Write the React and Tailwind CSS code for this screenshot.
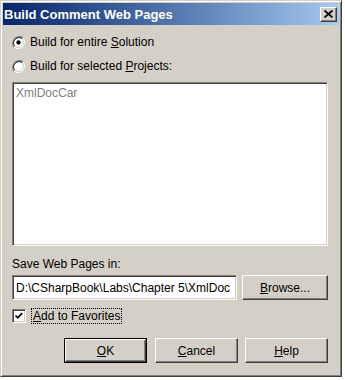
import React from "react";

const font = { fontFamily: '"Liberation Sans", Arial, sans-serif' };

function Radio({ checked }) {
  return (
    <svg width="13" height="13" viewBox="0 0 12 12" className="shrink-0">
      <circle cx="6" cy="6" r="5.5" fill="#ffffff" />
      <path d="M10.2 1.8 A6 6 0 0 0 1.8 10.2" stroke="#808080" strokeWidth="1" fill="none" />
      <path d="M9.5 2.5 A5 5 0 0 0 2.5 9.5" stroke="#404040" strokeWidth="1" fill="none" />
      <path d="M1.8 10.2 A6 6 0 0 0 10.2 1.8" stroke="#ffffff" strokeWidth="1" fill="none" />
      <path d="M2.5 9.5 A5 5 0 0 0 9.5 2.5" stroke="#d4d0c8" strokeWidth="1" fill="none" />
      {checked && <circle cx="6" cy="6" r="2" fill="#000000" />}
    </svg>
  );
}

function Btn({ children, className = "" }) {
  return (
    <div
      className={
        "flex items-center justify-center bg-[#d4d0c8] border border-t-white border-l-white border-r-[#404040] border-b-[#404040] shadow-[inset_-1px_-1px_0_#808080] text-[12px] text-black " +
        className
      }
    >
      {children}
    </div>
  );
}

export default function App() {
  return (
    <div className="w-[345px] h-[380px] bg-white" style={font}>
      <div className="w-[342px] h-[377px] bg-[#d4d0c8] border border-t-[#d4d0c8] border-l-[#d4d0c8] border-r-[#404040] border-b-[#404040] shadow-[inset_1px_1px_0_#ffffff,inset_-1px_-1px_0_#808080] p-[2px] flex flex-col">
        {/* Title bar */}
        <div className="h-[22px] w-full flex items-center justify-between bg-gradient-to-r from-[#0a246a] to-[#a6caf0] pr-[2px]">
          <span className="text-white font-bold text-[13px] leading-none pl-[1px]">
            Build Comment Web Pages
          </span>
          <div className="w-[17px] h-[15px] flex items-center justify-center bg-[#d4d0c8] border border-t-white border-l-white border-r-[#404040] border-b-[#404040] shadow-[inset_-1px_-1px_0_#808080]">
            <svg width="9" height="8" viewBox="0 0 9 8">
              <path d="M0.5 0.5 L8.5 7.5 M8.5 0.5 L0.5 7.5" stroke="#000" strokeWidth="1.8" />
            </svg>
          </div>
        </div>

        <div className="ml-[9px] w-[316px] flex flex-col text-[12px] text-black">
          {/* Radio 1 */}
          <div className="mt-[9px] h-[16px] flex items-center gap-[5px]">
            <Radio checked />
            <span className="leading-none">
              Build for entire <span className="underline">S</span>olution
            </span>
          </div>
          {/* Radio 2 */}
          <div className="mt-[8px] h-[16px] flex items-center gap-[5px]">
            <Radio />
            <span className="leading-none">
              Build for selected <span className="underline">P</span>rojects:
            </span>
          </div>
          {/* List box */}
          <div className="mt-[8px] h-[164px] w-full bg-white border border-t-[#808080] border-l-[#808080] border-r-white border-b-white shadow-[inset_1px_1px_0_#404040,inset_-1px_-1px_0_#d4d0c8] p-[2px]">
            <div className="pl-[1px] pt-[1px] leading-[14px] text-[#808080]">XmlDocCar</div>
          </div>
          {/* Label */}
          <div className="mt-[10px] h-[16px] flex items-center leading-none">Save Web Pages in:</div>
          {/* Textbox + Browse */}
          <div className="mt-[3px] h-[25px] flex gap-[5px]">
            <div className="w-[225px] h-[25px] bg-white border border-t-[#808080] border-l-[#808080] border-r-white border-b-white shadow-[inset_1px_1px_0_#404040,inset_-1px_-1px_0_#d4d0c8] flex items-center pl-[3px] overflow-hidden whitespace-nowrap">
              D:\CSharpBook\Labs\Chapter 5\XmlDoc
            </div>
            <Btn className="w-[86px] h-[25px]">
              <span>
                <span className="underline">B</span>rowse...
              </span>
            </Btn>
          </div>
          {/* Checkbox */}
          <div className="mt-[8px] h-[16px] flex items-center gap-[5px]">
            <div className="w-[14px] h-[14px] bg-white border border-t-[#808080] border-l-[#808080] border-r-white border-b-white shadow-[inset_1px_1px_0_#404040,inset_-1px_-1px_0_#d4d0c8] flex items-center justify-center">
              <svg width="8" height="8" viewBox="0 0 8 8">
                <path d="M0.5 3.5 L2.7 5.8 L7.2 1.2" stroke="#000" strokeWidth="1.8" fill="none" />
              </svg>
            </div>
            <span className="h-[16px] flex items-center px-[1px] border border-dotted border-black leading-none">
              <span className="underline">A</span>dd to Favorites
            </span>
          </div>
          {/* Buttons */}
          <div className="mt-[14px] h-[25px] flex justify-end">
            <div className="w-[83px] h-[25px] border border-black">
              <Btn className="w-full h-full">
                <span>
                  <span className="underline">O</span>K
                </span>
              </Btn>
            </div>
            <Btn className="w-[83px] h-[25px] ml-[8px]">
              <span>
                <span className="underline">C</span>ancel
              </span>
            </Btn>
            <Btn className="w-[83px] h-[25px] ml-[7px]">
              <span>
                <span className="underline">H</span>elp
              </span>
            </Btn>
          </div>
        </div>
      </div>
    </div>
  );
}
